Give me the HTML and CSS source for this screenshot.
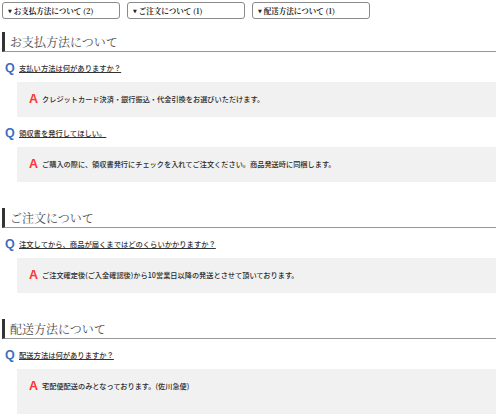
FILE: index.html
```html
<!DOCTYPE html>
<html lang="ja">
<head>
<meta charset="utf-8">
<title>よくある質問</title>
<link rel="stylesheet" href="styles.css">
</head>
<body>
<div class="page">
  <nav class="tabs">
    <a class="tab" href="#pay"><span class="tri">▼</span>お支払方法について (2)</a>
    <a class="tab" href="#order"><span class="tri">▼</span>ご注文について (1)</a>
    <a class="tab" href="#ship"><span class="tri">▼</span>配送方法について (1)</a>
  </nav>

  <section class="faq-section" id="pay">
    <h2 class="section-title">お支払方法について</h2>
    <div class="question"><span class="q-mark">Q</span><a class="q-text" href="#">支払い方法は何がありますか？</a></div>
    <div class="answer"><span class="a-mark">A</span><span class="a-text">クレジットカード決済・銀行振込・代金引換をお選びいただけます。</span></div>
    <div class="question"><span class="q-mark">Q</span><a class="q-text" href="#">領収書を発行してほしい。</a></div>
    <div class="answer"><span class="a-mark">A</span><span class="a-text">ご購入の際に、領収書発行にチェックを入れてご注文ください。商品発送時に同梱します。</span></div>
  </section>

  <section class="faq-section" id="order">
    <h2 class="section-title">ご注文について</h2>
    <div class="question"><span class="q-mark">Q</span><a class="q-text" href="#">注文してから、商品が届くまではどのくらいかかりますか？</a></div>
    <div class="answer"><span class="a-mark">A</span><span class="a-text">ご注文確定後(ご入金確認後)から10営業日以降の発送とさせて頂いております。</span></div>
  </section>

  <section class="faq-section" id="ship">
    <h2 class="section-title">配送方法について</h2>
    <div class="question"><span class="q-mark">Q</span><a class="q-text" href="#">配送方法は何がありますか？</a></div>
    <div class="answer answer-tall"><span class="a-mark">A</span><span class="a-text">宅配便配送のみとなっております。(佐川急便)</span></div>
  </section>
</div>
</body>
</html>
```

FILE: styles.css
```css
html, body {
  margin: 0;
  padding: 0;
  background: #ffffff;
}

.page {
  padding: 2px 4px 0 2px;
  font-family: "Noto Sans CJK JP", sans-serif;
  color: #333;
}

.tabs {
  display: flex;
  gap: 7px;
}

.tab {
  box-sizing: border-box;
  width: 118px;
  height: 17px;
  border: 1px solid #8a8a8a;
  border-radius: 3px;
  padding-left: 5px;
  display: flex;
  align-items: center;
  font-family: "Noto Serif CJK JP", "Liberation Serif", "Noto Sans CJK JP", serif;
  font-size: 7.5px;
  font-weight: bold;
  color: #222;
  text-decoration: none;
}

.tri {
  font-size: 5px;
  margin-right: 2px;
  font-family: "DejaVu Sans", sans-serif;
}

.faq-section {
  margin-top: 26px;
}

.tabs + .faq-section {
  margin-top: 13px;
}

.section-title {
  margin: 0 0 1px 0;
  padding: 1px 0 0 5px;
  border-left: 3px solid #333;
  border-bottom: 1px solid #999;
  font-family: "Noto Serif CJK JP", "Noto Sans CJK JP", serif;
  font-weight: normal;
  font-size: 12px;
  line-height: 18px;
  color: #4a4a4a;
}

.question {
  display: flex;
  align-items: center;
  height: 14px;
  margin: 9px 0 7px 3px;
}

.q-mark {
  font-family: "Liberation Sans", Arial, sans-serif;
  font-weight: bold;
  font-size: 12.5px;
  color: #3d6cc0;
  width: 14px;
}

.q-text {
  font-size: 7.3px;
  font-weight: 500;
  color: #333;
  text-decoration: underline;
}

.answer {
  margin-left: 15px;
  background: #f1f1f1;
  padding: 11px 12px;
  display: flex;
  align-items: center;
  line-height: 13px;
}

.answer-tall {
  padding-bottom: 21px;
}

.a-mark {
  font-family: "Liberation Sans", Arial, sans-serif;
  font-weight: bold;
  font-size: 12.5px;
  color: #f33;
  width: 13px;
}

.a-text {
  font-size: 7.2px;
  font-weight: 500;
  color: #2a2a2a;
}
```
